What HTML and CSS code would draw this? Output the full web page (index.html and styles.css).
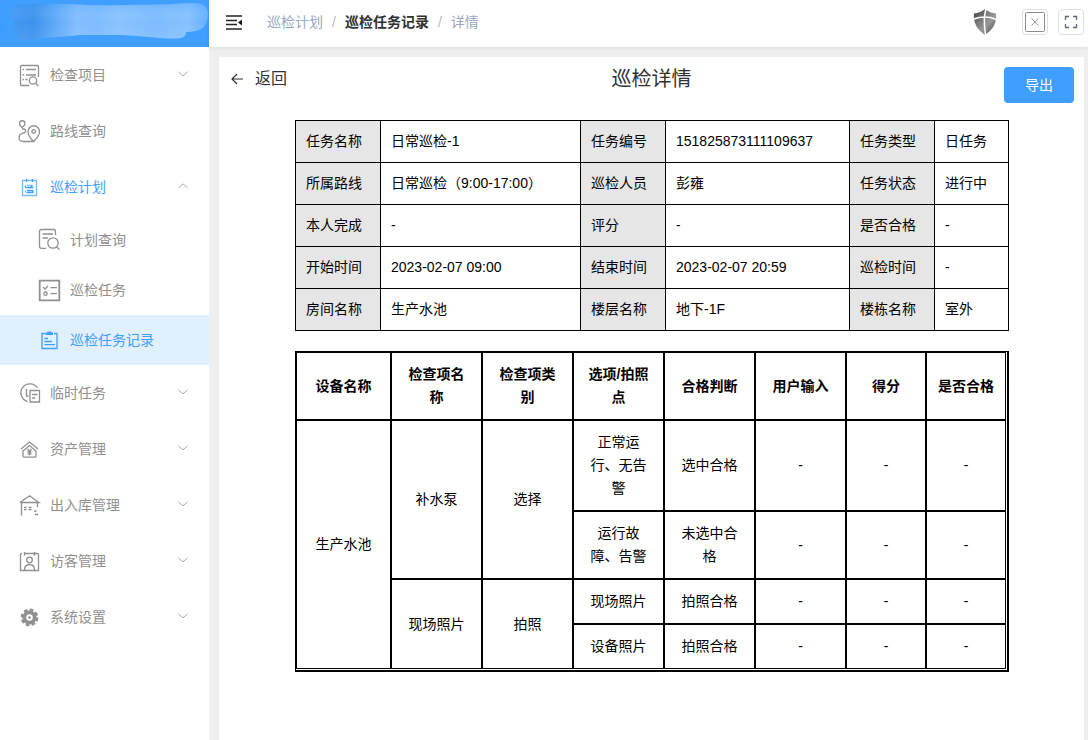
FILE: index.html
```html
<!DOCTYPE html>
<html lang="zh-CN">
<head>
<meta charset="utf-8">
<title>巡检详情</title>
<link rel="stylesheet" href="styles.css">
</head>
<body>
<div class="app">
  <aside class="sidebar">
    <div class="brand">
      <svg class="brand-art" viewBox="0 0 209 47" preserveAspectRatio="none" aria-hidden="true">
        <defs>
          <linearGradient id="brush" x1="0" x2="1" y1="0" y2="0">
            <stop offset="0" stop-color="#3d96f2"/>
            <stop offset=".12" stop-color="#368fec"/>
            <stop offset=".22" stop-color="#55a5f8"/>
            <stop offset=".34" stop-color="#80bcff"/>
            <stop offset=".44" stop-color="#7ab9ff"/>
            <stop offset=".55" stop-color="#86c1ff"/>
            <stop offset=".72" stop-color="#7ab9ff"/>
            <stop offset=".9" stop-color="#82bfff"/>
            <stop offset="1" stop-color="#60adff"/>
          </linearGradient>
          <linearGradient id="gloss" x1="0" x2="0" y1="0" y2="1">
            <stop offset="0" stop-color="#409eff" stop-opacity=".25"/>
            <stop offset=".5" stop-color="#fff" stop-opacity=".03"/>
            <stop offset="1" stop-color="#fff" stop-opacity=".1"/>
          </linearGradient>
        </defs>
        <path d="M16 5Q45 3 70 4Q100 6 125 5Q150 5 172 4Q185 3 197 3Q207 4 208 13Q208 23 203 28Q197 32 186 32Q186 37 181 38Q175 39 160 38Q140 36 122 35Q95 35 80 35Q60 37 45 38Q32 40 23 40Q15 38 14 30V20Q10 16 10 10Q12 6 16 5Z" fill="url(#brush)"/>
        <path d="M16 5Q45 3 70 4Q100 6 125 5Q150 5 172 4Q185 3 197 3Q207 4 208 13Q208 23 203 28Q197 32 186 32Q186 37 181 38Q175 39 160 38Q140 36 122 35Q95 35 80 35Q60 37 45 38Q32 40 23 40Q15 38 14 30V20Q10 16 10 10Q12 6 16 5Z" fill="url(#gloss)"/>
      </svg>
    </div>
    <nav class="menu">
      <a class="item" href="#">
        <svg class="icon" viewBox="18 63 24 24"><path d="M38.500 77V66.500Q38.500 65.500 37.500 65.500H21.500Q20.500 65.500 20.500 66.500V84.500Q20.500 85.500 21.500 85.500H29M22.500 69.500H24M26 69.500H36M22.500 75H24M26 75H36M22.500 79.500H24M25.500 79.500H27.500"/><circle cx="33" cy="80.500" r="3.700"/><path d="M35.700 83.200L38.500 86"/></svg>
        <span>检查项目</span>
        <svg class="chevron" viewBox="0 0 10 6"><path d="M.5 .8L5 5L9.500 .8"/></svg>
      </a>
      <a class="item" href="#">
        <svg class="icon" viewBox="18 119 24 24"><path d="M22 127.500Q19.500 125 19.500 123.500A2.700 2.700 0 0 1 25 123.500Q25 125.500 22 127.500ZM22 129H24Q26 129.500 25.500 131.500Q25 133 22 133.500Q19 134.500 19 137.500Q19.500 141.500 23 141.500H33.500Q28 136 28 131.500A5.700 5.700 0 0 1 39.500 131.500Q39.500 136 33.500 141.500"/><circle cx="33.700" cy="131.500" r="1.800"/></svg>
        <span>路线查询</span>
      </a>
      <a class="item current" href="#">
        <svg class="icon" viewBox="18 175 24 24"><path d="M22.500 180.500H36.500V195.500H22.500Z" class="soft"/><path d="M26.500 179V182M32.500 179V182M25.500 185.500Q25 187.500 27 187.500H32.500L31 186M33 192.500H26.500M27 190.500H31.500Q33.500 190.500 33 192.500"/><path d="M27 185.300H33M25.500 190.500V192.500" class="soft"/></svg>
        <span>巡检计划</span>
        <svg class="chevron" viewBox="0 0 10 6"><path d="M.5 5L5 .8L9.500 5"/></svg>
      </a>
      <div class="submenu">
        <a class="item sub" href="#">
          <svg class="icon" viewBox="38 229 24 24"><path d="M46 249.300H41.500Q39.500 249.300 39.500 247.300V232.500Q39.500 230.500 41.500 230.500H53.500Q55.500 230.500 55.500 232.500V236M42.500 235H53M42.500 239H48"/><circle cx="53" cy="244" r="5.200"/><path d="M56.500 248L59.500 250.500"/></svg>
          <span>计划查询</span>
        </a>
        <a class="item sub" href="#">
          <svg class="icon" viewBox="38 278 24 24"><path d="M39.700 280.700H59.300V300.300H39.700Z" class="thick"/><path d="M43 287L45 289L48 286M50.500 287.700H57M50.500 293.700H57"/><circle cx="45.500" cy="293.700" r="1.700"/></svg>
          <span>巡检任务</span>
        </a>
        <a class="item sub current selected" href="#" aria-current="page">
          <svg class="icon" viewBox="38 328 24 24"><path d="M45 333.500H42V348.500H57V333.500H54M44.500 338.500H48M44.500 341.500H52M44.500 344.700H55"/><path d="M45.500 332.500H47.500V331.500H51.500V332.500H53V335H45.500Z" class="solid"/></svg>
          <span>巡检任务记录</span>
        </a>
      </div>
      <a class="item" href="#">
        <svg class="icon" viewBox="18 381 24 24"><path d="M37.500 388A9 9 0 1 0 27.500 401.500M26.500 389V396H28.500"/><path d="M32 390.500H39.500V402H30V390.500H32M32 394.500H37.500M32 398H35"/></svg>
        <span>临时任务</span>
        <svg class="chevron" viewBox="0 0 10 6"><path d="M.5 .8L5 5L9.500 .8"/></svg>
      </a>
      <a class="item" href="#">
        <svg class="icon" viewBox="18 437 24 24"><path d="M21 449L29.500 442L38 449M23 451L29.500 445.500L36 451V456Q36 457.200 35 457.200H24.500Q23 457.200 23 456V450M27.500 449L29.500 451.500L31.500 449M27.500 452H31.500M27.500 453.800H31.500M29.500 451.500V455.500"/></svg>
        <span>资产管理</span>
        <svg class="chevron" viewBox="0 0 10 6"><path d="M.5 .8L5 5L9.500 .8"/></svg>
      </a>
      <a class="item" href="#">
        <svg class="icon" viewBox="18 493 24 24"><path d="M20 502.500L29.500 495.800L39 502.500H20M21.500 503V515.500M37.500 503V507M24 507.500H26.500M28.500 507.500H31.500M24 509.700H26.500M28.500 509.700H31.500M34 511H36.500M35 514.500H38"/></svg>
        <span>出入库管理</span>
        <svg class="chevron" viewBox="0 0 10 6"><path d="M.5 .8L5 5L9.500 .8"/></svg>
      </a>
      <a class="item" href="#">
        <svg class="icon" viewBox="18 549 24 24"><path d="M22 553.500H21.500Q20.500 553.500 20.500 554.500V570.500H38.500V554.500Q38.500 553.500 37.500 553.500H25M24.500 552V555.500M34.500 552V555.500M24.500 570Q24.500 564.500 29.500 564.500T34.500 570"/><circle cx="29.500" cy="560" r="2.800"/></svg>
        <span>访客管理</span>
        <svg class="chevron" viewBox="0 0 10 6"><path d="M.5 .8L5 5L9.500 .8"/></svg>
      </a>
      <a class="item" href="#">
        <svg class="icon" viewBox="-11.500 -12.500 24 24"><circle r="5.200" class="gear-ring"/><circle r="7.400" class="gear-teeth"/><circle r="1.300" class="solid"/></svg>
        <span>系统设置</span>
        <svg class="chevron" viewBox="0 0 10 6"><path d="M.5 .8L5 5L9.500 .8"/></svg>
      </a>
    </nav>
  </aside>

  <div class="content">
    <header class="topbar">
      <button class="fold" type="button" aria-label="收起菜单">
        <svg viewBox="0 0 16 16"><path d="M0 2H16M0 6.500H11M0 10.500H11M0 15H16" fill="none" stroke="#222" stroke-width="1.700"/><path d="M12 8.500L16 5.500V11.500Z" fill="#111"/></svg>
      </button>
      <nav class="crumbs" aria-label="面包屑">
        <a href="#">巡检计划</a><i>/</i><a class="strong" href="#">巡检任务记录</a><i>/</i><span>详情</span>
      </nav>
      <div class="tools">
        <svg class="shield" viewBox="0 0 24 28" aria-hidden="true">
          <defs>
            <linearGradient id="steel" x1="0" x2="1" y1="0" y2="1">
              <stop offset="0" stop-color="#3c3c3c"/>
              <stop offset=".35" stop-color="#777"/>
              <stop offset=".6" stop-color="#999"/>
              <stop offset="1" stop-color="#444"/>
            </linearGradient>
          </defs>
          <path d="M12 1Q17 5 23 5.500Q24.500 19 12 27Q-.5 19 1 5.500Q7 5 12 1Z" fill="url(#steel)"/>
          <path d="M13 1Q10 10 12.500 27M1 11Q12 7 23.500 11.500" fill="none" stroke="#fff" stroke-width="1.500"/>
        </svg>
        <button class="tool" type="button" aria-label="关闭">
          <svg viewBox="0 0 20 20"><rect x=".5" y=".5" width="19" height="19" rx="1" fill="none" stroke="#8c8c8c"/><path d="M6.500 6.500L13.500 13.500M13.500 6.500L6.500 13.500" stroke="#999"/></svg>
        </button>
        <button class="tool" type="button" aria-label="全屏">
          <svg viewBox="0 0 20 20"><path d="M4.500 8V4.500H8M12 4.500H15.500V8M15.500 12V15.500H12M8 15.500H4.500V12" fill="none" stroke="#5a6b80" stroke-width="1.300"/></svg>
        </button>
      </div>
    </header>

    <main class="panel">
      <div class="heading">
        <a class="back" href="#">
          <svg viewBox="0 0 12 12"><path d="M12 6H1M6 1L1 6L6 11" fill="none" stroke="#303133" stroke-width="1.200"/></svg>
          <span>返回</span>
        </a>
        <h1>巡检详情</h1>
        <button class="export" type="button">导出</button>
      </div>

      <div class="tables">
        <table class="info">
          <colgroup><col class="w-label"><col class="w-first"><col class="w-label"><col class="w-second"><col class="w-label"><col class="w-third"></colgroup>
          <tbody>
            <tr><th scope="row">任务名称</th><td>日常巡检-1</td><th scope="row">任务编号</th><td>151825873111109637</td><th scope="row">任务类型</th><td>日任务</td></tr>
            <tr><th scope="row">所属路线</th><td>日常巡检（9:00-17:00）</td><th scope="row">巡检人员</th><td>彭雍</td><th scope="row">任务状态</th><td>进行中</td></tr>
            <tr><th scope="row">本人完成</th><td>-</td><th scope="row">评分</th><td>-</td><th scope="row">是否合格</th><td>-</td></tr>
            <tr><th scope="row">开始时间</th><td>2023-02-07 09:00</td><th scope="row">结束时间</th><td>2023-02-07 20:59</td><th scope="row">巡检时间</th><td>-</td></tr>
            <tr><th scope="row">房间名称</th><td>生产水池</td><th scope="row">楼层名称</th><td>地下-1F</td><th scope="row">楼栋名称</th><td>室外</td></tr>
          </tbody>
        </table>

        <div class="checks-frame">
          <table class="checks">
            <colgroup><col class="w-device"><col class="w-check"><col class="w-check"><col class="w-check"><col class="w-check"><col class="w-check"><col class="w-score"><col class="w-score"></colgroup>
            <thead>
              <tr><th scope="col">设备名称</th><th scope="col">检查项名称</th><th scope="col">检查项类别</th><th scope="col">选项/拍照点</th><th scope="col">合格判断</th><th scope="col">用户输入</th><th scope="col">得分</th><th scope="col">是否合格</th></tr>
            </thead>
            <tbody>
              <tr><td rowspan="4">生产水池</td><td rowspan="2">补水泵</td><td rowspan="2">选择</td><td>正常运行、无告警</td><td>选中合格</td><td>-</td><td>-</td><td>-</td></tr>
              <tr><td>运行故障、告警</td><td>未选中合格</td><td>-</td><td>-</td><td>-</td></tr>
              <tr><td rowspan="2">现场照片</td><td rowspan="2">拍照</td><td>现场照片</td><td>拍照合格</td><td>-</td><td>-</td><td>-</td></tr>
              <tr><td>设备照片</td><td>拍照合格</td><td>-</td><td>-</td><td>-</td></tr>
            </tbody>
          </table>
        </div>
      </div>
    </main>
  </div>
</div>
</body>
</html>
```

FILE: styles.css
```css
* {
  box-sizing: border-box;
}

body {
  margin: 0;
  color: #303133;
  font: 14px/20px "Liberation Sans", "Noto Sans CJK SC", sans-serif;
}

a {
  color: inherit;
  text-decoration: none;
}

button {
  margin: 0;
  padding: 0;
  border: 0;
  background: none;
  font: inherit;
  cursor: pointer;
}

svg {
  display: block;
}

.app {
  display: flex;
  min-height: 100vh;
  background: #efefef;
}

/* Sidebar */
.sidebar {
  flex: 0 0 209px;
  background: #fff;
}

.brand {
  height: 47px;
  background: #409eff;
}

.brand-art {
  width: 100%;
  height: 100%;
}

.item {
  display: flex;
  align-items: center;
  gap: 8px;
  height: 56px;
  padding: 0 21px 0 18px;
  color: #909090;
}

.item.sub {
  height: 50px;
  padding-left: 38px;
}

.item.current {
  color: #409eff;
}

.item.selected {
  background: #e1f0ff;
}

.icon {
  flex: none;
  width: 24px;
  height: 24px;
  fill: none;
  stroke: currentColor;
  stroke-width: 1.3;
}

.icon .soft {
  opacity: .7;
}

.icon .thick {
  stroke-width: 1.8;
}

.icon .solid {
  fill: currentColor;
  stroke: none;
}

.icon .gear-ring {
  stroke-width: 3.8;
}

.icon .gear-teeth {
  stroke-width: 3;
  stroke-dasharray: 3.6 2.21;
}

.chevron {
  width: 10px;
  height: 6px;
  margin: 0 0 2px auto;
  fill: none;
  stroke: #a0a8b2;
}

/* Header */
.content {
  display: flex;
  flex: 1;
  flex-direction: column;
  min-width: 0;
}

.topbar {
  display: flex;
  align-items: center;
  height: 47px;
  padding: 0 4px 3px 17px;
  background: #fff;
  box-shadow: 0 1px 4px rgba(0, 21, 41, .08);
}

.fold svg {
  width: 16px;
  height: 16px;
}

.crumbs {
  display: flex;
  margin-left: 25px;
  color: #97a8be;
}

.crumbs i {
  margin: 0 9px;
  color: #b4bac4;
  font-style: normal;
}

.crumbs .strong {
  color: #303133;
  font-weight: 700;
}

.tools {
  display: flex;
  align-items: center;
  gap: 10px;
  margin-left: auto;
}

.shield {
  width: 24px;
  height: 28px;
  margin-right: 15px;
}

.tool {
  display: grid;
  place-items: center;
  width: 26px;
  height: 26px;
  border: 1px solid #dcdfe6;
  border-radius: 4px;
}

.tool svg {
  width: 20px;
  height: 20px;
}

/* Detail panel */
.panel {
  flex: 1;
  margin: 10px 4px 0 10px;
  padding: 10px;
  background: #fff;
}

.heading {
  display: grid;
  grid-template-columns: 1fr auto 1fr;
  align-items: start;
}

.back {
  display: flex;
  align-items: center;
  gap: 12px;
  padding-left: 2px;
  font-size: 16px;
  line-height: 24px;
}

.back svg {
  width: 12px;
  height: 12px;
}

h1 {
  margin: 0;
  font-size: 20px;
  font-weight: 400;
  line-height: 24px;
}

.export {
  justify-self: end;
  width: 70px;
  height: 36px;
  border-radius: 4px;
  background: #409eff;
  color: #fff;
}

.tables {
  margin: 17px 65px 0 66px;
  color: #000;
}

table {
  width: 100%;
  table-layout: fixed;
}

.info {
  border-collapse: collapse;
}

.info th,
.info td {
  height: 42px;
  padding: 0 10px 2px;
  border: 1px solid #000;
  font-weight: 400;
  text-align: left;
}

.info th {
  background: #e6e6e6;
}

.w-label {
  width: 85px;
}

.w-first {
  width: 200px;
}

.w-second {
  width: 184px;
}

.w-third {
  width: 74px;
}

.checks-frame {
  margin-top: 20px;
  padding: 0 1px 1px 0;
  border: solid #000;
  border-width: 1px 2px 2px 1px;
}

.checks {
  border-collapse: separate;
  border-spacing: 0;
}

.checks th,
.checks td {
  padding: 10px;
  border: 1px solid #000;
  line-height: 23px;
  text-align: center;
}

.w-device {
  width: 95px;
}

.w-check {
  width: 91px;
}

.w-score {
  width: 80px;
}
```
